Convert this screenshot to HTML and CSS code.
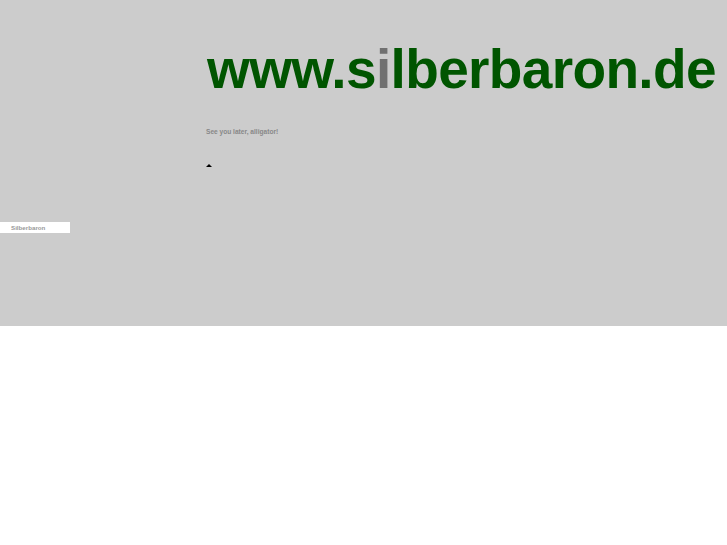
FILE: index.html
```html
<!DOCTYPE html>
<html>
<head>
<meta charset="utf-8">
<link rel="stylesheet" href="styles.css">
</head>
<body>
<div class="page">
  <div class="side">
    <div class="navbox">Silberbaron</div>
  </div>
  <div class="main">
    <h1 class="title">www.s<span class="gi">i</span>lberbaron.de</h1>
    <p class="slogan">See you later, alligator!</p>
    <div class="arrow"></div>
  </div>
</div>
</body>
</html>
```
FILE: styles.css
```css
html, body {
  margin: 0;
  padding: 0;
  background: #ffffff;
}
.page {
  display: flex;
  height: 326px;
  background: #cccccc;
  font-family: "Liberation Sans", Arial, sans-serif;
}
.side {
  width: 206px;
  flex: none;
  padding-top: 222px;
  box-sizing: border-box;
}
.navbox {
  width: 59px;
  height: 11px;
  background: #ffffff;
  padding-left: 11px;
  font-size: 6.2px;
  font-weight: bold;
  line-height: 11px;
  color: #999999;
}
.main {
  flex: 1;
  padding-top: 37px;
}
.title {
  margin: 0 0 0 1px;
  font-size: 55px;
  font-weight: bold;
  line-height: 64px;
  color: #005500;
  letter-spacing: -0.65px;
  white-space: nowrap;
}
.gi {
  color: #707070;
}
.slogan {
  margin: 27px 0 0 0;
  font-size: 6.6px;
  font-weight: bold;
  color: #888888;
  line-height: 8px;
}
.arrow {
  margin-top: 28px;
  width: 0;
  height: 0;
  border-left: 3.5px solid transparent;
  border-right: 3.5px solid transparent;
  border-bottom: 3px solid #000000;
}
```
